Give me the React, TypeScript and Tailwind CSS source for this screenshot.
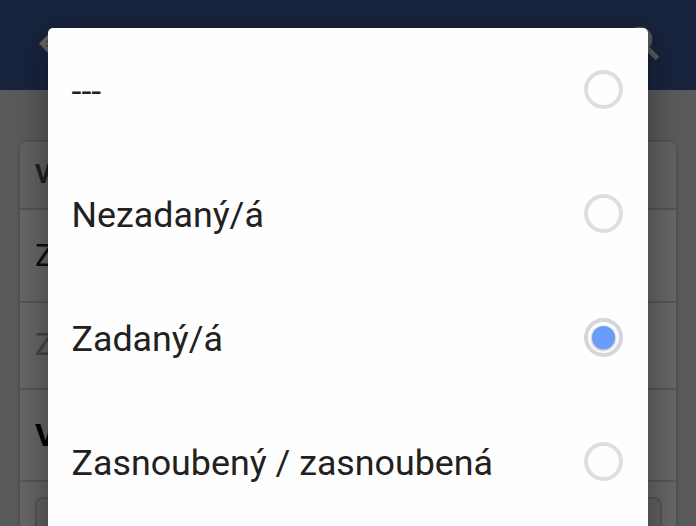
import { useState } from 'react';

const options = ['---', 'Nezadaný/á', 'Zadaný/á', 'Zasnoubený / zasnoubená'];

function NavBar() {
  return (
    <header className="h-[90px] bg-[#3d5b9c] flex items-start justify-between pl-[38px] pr-9 pt-6">
      <svg width="40" height="40" viewBox="0 0 40 40" fill="none" stroke="#fff" strokeWidth="6">
        <path d="M20 19.500 H36" />
        <path d="M1 19.500 L11 9.500 H20 V30 H11 Z" fill="#fff" stroke="none" />
        <path d="M8 17.500 H12 M8 22 H12" stroke="#b0b0b0" strokeWidth="1.500" />
      </svg>
      <svg width="40" height="40" viewBox="0 0 40 40" fill="none" stroke="#e0e0dc" strokeWidth="5">
        <circle cx="19.500" cy="15.500" r="10.300" />
        <path d="M26.500 23.500 L37.500 34.500" strokeWidth="5" />
      </svg>
    </header>
  );
}

function FormCard() {
  return (
    <section className="mt-[50px] ml-[18px] w-[660px] h-[420px] shrink-0 rounded-lg border-2 border-[#cbcdcf] bg-white overflow-hidden">
      <div className="h-[68px] px-[15px] flex items-center bg-[#f0f4f2] border-b-2 border-[#d0d0d0] text-[25px] font-bold text-[#4b4f5c]">V</div>
      <div className="h-[93px] px-[15px] flex items-center border-b-2 border-[#dadada] text-[31px] text-[#1d2129]"><span className="pt-0.5">Z</span></div>
      <div className="h-[87px] px-[15px] flex items-center border-b-2 border-[#dadada] text-[31px] text-[#acacac]">Z</div>
      <div className="h-[92px] px-[15px] flex items-center border-b-2 border-[#dadada] text-[32px] font-bold text-black">V</div>
      <div className="pl-[15px] pr-3.5 pt-[15px]">
        <div className="h-20 rounded-lg border-2 border-[#d0d2d3] bg-[#f4f6f6]" />
      </div>
    </section>
  );
}

function Radio({ checked }: { checked: boolean }) {
  return (
    <span className={`w-[39px] h-[39px] rounded-full border-4 flex items-center justify-center shrink-0 ${checked ? 'border-[#d4d6dc]' : 'border-[#dddee4]'}`}>
      {checked && <span className="w-[23px] h-[23px] rounded-full bg-[#6a9dfb] shadow-[0_1px_3px_rgba(0,0,0,0.4)]" />}
    </span>
  );
}

export default function App() {
  const [selected, setSelected] = useState(2);
  return (
    <div className="relative w-[696px] h-[526px] overflow-hidden bg-[#dfe2e7] font-[Roboto,sans-serif]">
      <NavBar />
      <FormCard />
      <div className="absolute inset-0 bg-black/60 pt-7 pl-12">
        <div role="radiogroup" className="w-[600px] h-[620px] rounded-[5px] bg-[#fefefe] shadow-[0_6px_36px_rgba(0,0,0,0.4)]">
          {options.map((o, i) => (
            <button key={o} role="radio" aria-checked={i === selected} onClick={() => setSelected(i)} className="w-full h-[124px] pl-[23.5px] pr-[25.5px] pb-px flex items-center justify-between text-left text-[35.8px] text-[#212121]">
              <span className="pt-[5px]">{o}</span>
              <Radio checked={i === selected} />
            </button>
          ))}
        </div>
      </div>
    </div>
  );
}
